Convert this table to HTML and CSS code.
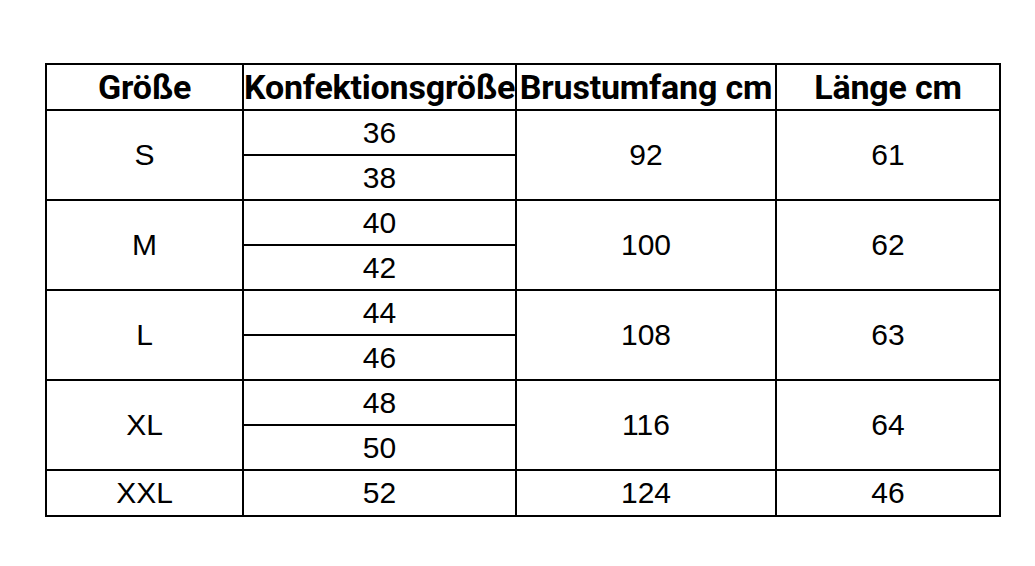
FILE: index.html
```html
<!DOCTYPE html>
<html>
<head>
<meta charset="utf-8">
<link rel="stylesheet" href="styles.css">
</head>
<body>
<div class="wrap">
<table class="sizes">
  <colgroup>
    <col class="c1"><col class="c2"><col class="c3"><col class="c4">
  </colgroup>
  <thead>
    <tr class="head"><th>Größe</th><th>Konfektionsgröße</th><th>Brustumfang cm</th><th>Länge cm</th></tr>
  </thead>
  <tbody>
    <tr class="sub"><td rowspan="2">S</td><td>36</td><td rowspan="2">92</td><td rowspan="2">61</td></tr>
    <tr class="sub"><td>38</td></tr>
    <tr class="sub"><td rowspan="2">M</td><td>40</td><td rowspan="2">100</td><td rowspan="2">62</td></tr>
    <tr class="sub"><td>42</td></tr>
    <tr class="sub"><td rowspan="2">L</td><td>44</td><td rowspan="2">108</td><td rowspan="2">63</td></tr>
    <tr class="sub"><td>46</td></tr>
    <tr class="sub"><td rowspan="2">XL</td><td>48</td><td rowspan="2">116</td><td rowspan="2">64</td></tr>
    <tr class="sub"><td>50</td></tr>
    <tr class="last"><td>XXL</td><td>52</td><td>124</td><td>46</td></tr>
  </tbody>
</table>
</div>
</body>
</html>
```
FILE: styles.css
```css
html, body { margin: 0; padding: 0; background: #fff; }
.wrap { padding: 63px 0 0 45px; }
.sizes {
  border-collapse: collapse;
  table-layout: fixed;
  width: 954px;
  font-family: "Liberation Sans", Arial, sans-serif;
  color: #000;
}
.c1 { width: 197px; }
.c2 { width: 273px; }
.c3 { width: 260px; }
.c4 { width: 224px; }
.sizes th, .sizes td {
  border: 2px solid #000;
  text-align: center;
  vertical-align: middle;
  padding: 0;
  overflow: visible;
  white-space: nowrap;
}
.sizes th {
  font-family: "Roboto", "Liberation Sans", sans-serif;
  font-weight: 700;
  font-size: 34px;
  letter-spacing: -0.2px;
  height: 44px;
  line-height: 44px;
}
.sizes td { font-size: 30px; }
.sub td { height: 43px; }
.last td { height: 44px; }
```
